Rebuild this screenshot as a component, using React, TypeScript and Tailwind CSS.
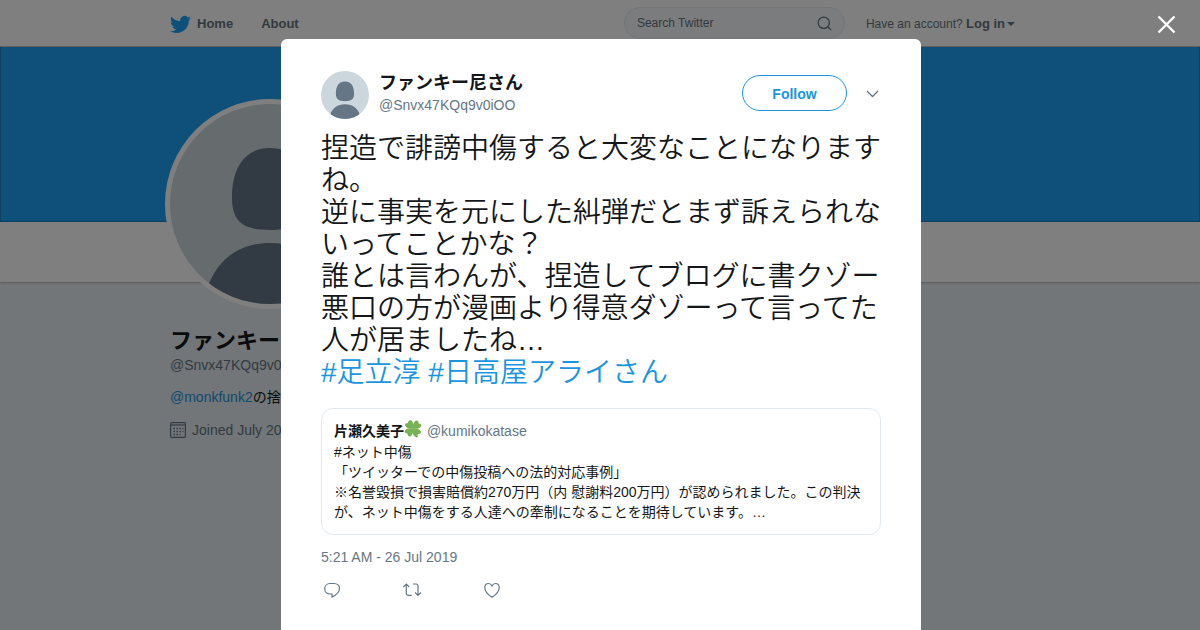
import type { ReactNode } from "react";
import { Search } from "lucide-react";

const TWEET_LINES = [
  "捏造で誹謗中傷すると大変なことになりますね。",
  "逆に事実を元にした糾弾だとまず訴えられないってことかな？",
  "誰とは言わんが、捏造してブログに書クゾー悪口の方が漫画より得意ダゾーって言ってた人が居ましたね…",
];

function BirdLogo() {
  return (
    <svg viewBox="0 0 24 24" className="size-[21px] text-[#1da1f2]" fill="currentColor" aria-hidden="true">
      <path d="M23.953 4.57a10 10 0 01-2.825.775 4.958 4.958 0 002.163-2.723c-.951.555-2.005.959-3.127 1.184a4.92 4.92 0 00-8.384 4.482C7.69 8.095 4.067 6.13 1.64 3.162a4.822 4.822 0 00-.666 2.475c0 1.71.87 3.213 2.188 4.096a4.904 4.904 0 01-2.228-.616v.06a4.923 4.923 0 003.946 4.827 4.996 4.996 0 01-2.212.085 4.936 4.936 0 004.604 3.417 9.867 9.867 0 01-6.102 2.105c-.39 0-.779-.023-1.17-.067a13.995 13.995 0 007.557 2.209c9.053 0 13.998-7.496 13.998-13.985 0-.21 0-.42-.015-.63A9.935 9.935 0 0024 4.59z" />
    </svg>
  );
}

function DefaultAvatar({ className }: { className: string }) {
  return (
    <svg viewBox="0 0 200 200" className={`rounded-full bg-[#ccd6dd] ${className}`} role="img" aria-label="Profile picture">
      <path
        fill="#657786"
        d="M100 44c24 0 38 18 38 50 0 24-12 32-38 32s-38-8-38-32c0-32 14-50 38-50zM100 139c32 0 52 17 62 43l-20 18H58l-20-18c10-26 30-43 62-43z"
      />
    </svg>
  );
}

function Clover() {
  return (
    <svg viewBox="0 0 36 36" className="mr-px inline-block size-[18px] align-[-2px]" role="img" aria-label="Four leaf clover">
      <path d="M17 17c1 7 4 13 8 18l3-1c-5-5-8-11-9-18z" fill="#5c913b" />
      <g fill="#77b255" transform="rotate(48 18 17)">
        <path d="M18 17C12 13 9 7 10 3c1-4 5-4 8-1 3-3 7-3 8 1 1 4-2 10-8 14z" />
        <path d="M18 17c4-6 10-9 14-8 4 1 4 5 1 8 3 3 3 7-1 8-4 1-10-2-14-8z" />
        <path d="M18 17c6 4 9 10 8 14-1 4-5 4-8 1-3 3-7 3-8-1-1-4 2-10 8-14z" />
        <path d="M18 17c-4 6-10 9-14 8-4-1-4-5-1-8-3-3-3-7 1-8 4-1 10 2 14 8z" />
      </g>
    </svg>
  );
}

function CalendarIcon() {
  return (
    <svg viewBox="0 0 16 16" className="size-4" fill="none" stroke="currentColor" strokeWidth="1.2" aria-hidden="true">
      <rect x="0.6" y="0.6" width="14.800" height="14.800" rx="1" />
      <path d="M1 3h14" />
      <path d="M3.500 6.500h10M3.500 9.500h10M3.500 12.500h7" strokeWidth="1.500" strokeDasharray="1.500 1.500" />
    </svg>
  );
}

function ActionButton({ label, children }: { label: string; children: ReactNode }) {
  return (
    <button type="button" aria-label={label} className="flex w-20 text-[#657786]">
      <svg viewBox="0 0 22 18" className="h-[18px] w-[22px]" fill="none" stroke="currentColor" strokeWidth="1.2" aria-hidden="true">
        {children}
      </svg>
    </button>
  );
}

function TopBar() {
  return (
    <header className="h-[47px] border-b border-black/25 bg-white">
      <div className="mx-auto flex h-full max-w-[860px] items-center text-[13px] text-[#66757f]">
        <nav className="flex items-center gap-7 pt-0.5 font-bold">
          <a href="#home" className="flex items-center gap-1.5">
            <BirdLogo />
            Home
          </a>
          <a href="#about">About</a>
        </nav>
        <form className="ml-auto flex h-8 w-[221px] items-center rounded-full border border-[#e6ecf0] bg-[#f5f8fa] pr-[11px] pl-3">
          <input
            type="search"
            aria-label="Search Twitter"
            placeholder="Search Twitter"
            className="min-w-0 flex-1 text-xs placeholder:text-[#66757f] placeholder:opacity-100"
          />
          <button type="submit" aria-label="Search">
            <Search className="size-[17px]" strokeWidth={1.8} />
          </button>
        </form>
        <a href="#login" className="mt-0.5 mr-[15px] ml-[21px] flex h-3.5 items-center gap-0.5 overflow-hidden leading-4">
          <span className="text-xs">
            Have an account? <strong className="text-[13px]">Log in</strong>
          </span>
          <span className="border-x-4 border-t-4 border-x-transparent border-t-current" />
        </a>
      </div>
    </header>
  );
}

function ProfilePage() {
  return (
    <div className="min-h-screen bg-[#e6ecf0]">
      <TopBar />
      <div className="h-[175px] border border-t-0 border-[#1a7fc0] bg-[#1da1f2]" />
      <div className="h-[60px] bg-white shadow-[0_1px_2px_rgba(0,0,0,0.25)]">
        <div className="relative mx-auto max-w-[860px]">
          <div className="absolute -top-[123px] -left-[5px] rounded-full bg-white p-[5px]">
            <DefaultAvatar className="size-[200px]" />
          </div>
        </div>
      </div>
      <aside className="mx-auto max-w-[860px] pt-[45px] text-sm leading-5 text-[#657786]">
        <h1 className="text-[22px] leading-7 font-bold text-[#14171a]">ファンキー尼さん</h1>
        <p>@Snvx47KQq9v0iOO</p>
        <p className="mt-3 text-[#14171a]">
          <a href="#monkfunk2" className="text-[#1b95e0]">@monkfunk2</a>の捨て垢
        </p>
        <p className="mt-[13px] flex items-center gap-1.5">
          <CalendarIcon />
          Joined July 2019
        </p>
      </aside>
    </div>
  );
}

function QuotedTweet() {
  return (
    <blockquote className="mt-[19px] rounded-xl border border-[#e1e8ed] px-3 pt-[11px] pb-3 text-sm leading-5 text-[#14171a]">
      <div className="h-[22px]">
        <b>片瀬久美子</b>
        <Clover /> <span className="text-[#657786]">@kumikokatase</span>
      </div>
      <p>#ネット中傷</p>
      <p>「ツイッターでの中傷投稿への法的対応事例」</p>
      <p>
        ※名誉毀損で損害賠償約270万円（内 慰謝料200万円）が認められました。この判決が、ネット中傷をする人達への牽制になることを期待しています。…
      </p>
    </blockquote>
  );
}

function Tweet() {
  return (
    <article className="w-[640px] max-w-full rounded-t-md bg-white px-10 pt-8">
      <header className="flex">
        <DefaultAvatar className="size-12" />
        <div className="ml-2.5">
          <h2 className="text-lg leading-6 font-bold text-[#14171a]">ファンキー尼さん</h2>
          <p className="text-sm leading-5 text-[#657786]">@Snvx47KQq9v0iOO</p>
        </div>
        <button
          type="button"
          className="mt-1 ml-auto h-9 w-[105px] rounded-full border border-[#1b95e0] pt-0.5 text-sm font-bold text-[#1b95e0]"
        >
          Follow
        </button>
        <button type="button" aria-label="More" className="mt-1 mr-0.5 ml-[19px] flex h-9 items-center pt-0.5 text-[#657786]">
          <svg viewBox="0 0 13 8" className="h-2 w-[13px]" fill="none" stroke="currentColor" strokeWidth="1.3" aria-hidden="true">
            <path d="M1 1l5.500 5.500L12 1" />
          </svg>
        </button>
      </header>

      <div className="mt-3.5 text-[28px] leading-8 font-[350] text-[#14171a]">
        {TWEET_LINES.map((line) => (
          <p key={line}>{line}</p>
        ))}
        <p className="text-[#1b95e0]">
          <a href="#adachi">#足立淳</a> <a href="#hidakaya">#日高屋アライさん</a>
        </p>
      </div>

      <QuotedTweet />

      <p className="mt-3 text-sm leading-5 text-[#657786]">5:21 AM - 26 Jul 2019</p>

      <div className="mt-3.5 flex">
        <ActionButton label="Reply">
          <path d="M9 2.500h4c3.300 0 5.500 2.300 5.500 5.200 0 3.200-2.700 5.800-7.500 8.300v-3H9c-3.200 0-5.300-2.300-5.300-5.200S5.800 2.500 9 2.500z" />
        </ActionButton>
        <ActionButton label="Retweet">
          <path d="M2.300 6l3-3 3 3M5.300 3v9.500c0 1.200.6 1.800 1.800 1.800h3.700M12 3h3.200c1.200 0 1.800.6 1.800 1.800v9.500M14 11.500l3 3 3-3" />
        </ActionButton>
        <ActionButton label="Like">
          <path d="M11 16.200C6.500 13.500 3.800 10.300 3.800 6.800c0-2.500 1.600-4.300 3.700-4.300 1.500 0 2.800.9 3.500 2.400.7-1.500 2-2.400 3.500-2.400 2.100 0 3.700 1.800 3.700 4.300 0 3.500-2.700 6.700-7.200 9.400z" />
        </ActionButton>
      </div>
    </article>
  );
}

export default function App() {
  return (
    <div className="h-screen overflow-hidden font-['Liberation_Sans','Noto_Sans_CJK_JP',sans-serif]" lang="ja">
      <ProfilePage />
      <div role="dialog" aria-label="Tweet" className="fixed inset-0 flex justify-center overflow-hidden bg-black/50 pt-[39px] pl-0.5">
        <Tweet />
        <button type="button" aria-label="Close" className="absolute top-[15px] right-6 text-white">
          <svg viewBox="0 0 19 19" className="size-[19px]" stroke="currentColor" strokeWidth="2.400" aria-hidden="true">
            <path d="M1.500 1.500l16 16M17.500 1.500l-16 16" />
          </svg>
        </button>
      </div>
    </div>
  );
}
